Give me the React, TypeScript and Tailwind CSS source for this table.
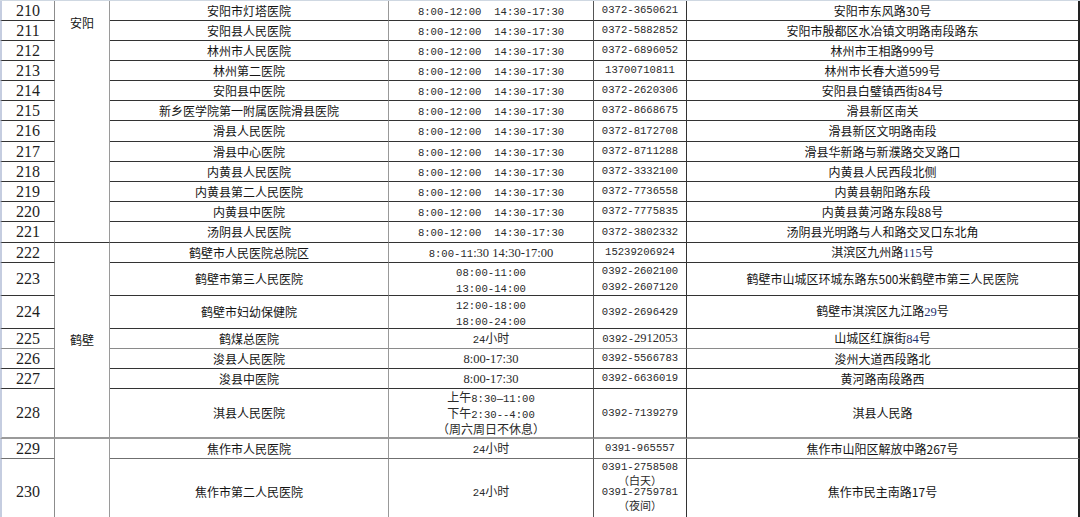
import type { ReactNode } from "react";

const cjk = "font-['Noto_Sans_CJK_SC',sans-serif] text-[12px]";
const M = ({ children }: { children: ReactNode }) => (
  <span className="font-['Liberation_Mono','Noto_Sans_CJK_SC',monospace] text-[10.6px] whitespace-pre">{children}</span>
);
const S = ({ children, blue }: { children: ReactNode; blue?: boolean }) => (
  <span className={`font-['Liberation_Serif',serif] text-[12.5px] ${blue ? "text-[#1d3170]" : ""}`}>{children}</span>
);
const C = ({ children }: { children: ReactNode }) => (
  <span className="font-['Noto_Sans_CJK_SC',sans-serif] text-[11px]">{children}</span>
);
// one line of a multi-line cell, fixed height so mixed fonts can't stretch the row
const L = ({ children, tight }: { children: ReactNode; tight?: boolean }) => (
  <div className={tight ? "h-[12.5px] leading-[12.5px] overflow-visible" : "h-[16px] leading-[16px] overflow-visible"}>{children}</div>
);

type Row = {
  n: string;
  h: string;
  hosp: ReactNode;
  hours: ReactNode;
  phone: ReactNode;
  addr: ReactNode;
  b?: string;
  phoneCls?: string;
};

const std = <M>{"8:00-12:00  14:30-17:30"}</M>;

const anyang: Row[] = [
  { n: "210", h: "h-[20px]", hosp: "安阳市灯塔医院", hours: std, phone: "0372-3650621", addr: "安阳市东风路30号" },
  { n: "211", h: "h-[20px]", hosp: "安阳县人民医院", hours: std, phone: "0372-5882852", addr: "安阳市殷都区水冶镇文明路南段路东" },
  { n: "212", h: "h-[20px]", hosp: "林州市人民医院", hours: std, phone: "0372-6896052", addr: "林州市王相路999号" },
  { n: "213", h: "h-[20px]", hosp: "林州第二医院", hours: std, phone: "13700710811", addr: "林州市长春大道599号" },
  { n: "214", h: "h-[20px]", hosp: "安阳县中医院", hours: std, phone: "0372-2620306", addr: "安阳县白璧镇西街84号" },
  { n: "215", h: "h-[20px]", hosp: "新乡医学院第一附属医院滑县医院", hours: std, phone: "0372-8668675", addr: "滑县新区南关" },
  { n: "216", h: "h-[21px]", hosp: "滑县人民医院", hours: std, phone: "0372-8172708", addr: "滑县新区文明路南段" },
  { n: "217", h: "h-[20px]", hosp: "滑县中心医院", hours: std, phone: "0372-8711288", addr: "滑县华新路与新濮路交叉路口" },
  { n: "218", h: "h-[20px]", hosp: "内黄县人民医院", hours: std, phone: "0372-3332100", addr: "内黄县人民西段北侧" },
  { n: "219", h: "h-[20px]", hosp: "内黄县第二人民医院", hours: std, phone: "0372-7736558", addr: "内黄县朝阳路东段" },
  { n: "220", h: "h-[20px]", hosp: "内黄县中医院", hours: std, phone: "0372-7775835", addr: "内黄县黄河路东段88号" },
  { n: "221", h: "h-[21px]", hosp: "汤阴县人民医院", hours: std, phone: "0372-3802332", addr: "汤阴县光明路与人和路交叉口东北角" },
];

const hebi: Row[] = [
  {
    n: "222",
    h: "h-[20px]",
    hosp: "鹤壁市人民医院总院区",
    hours: (
      <>
        <M>8:00-11</M>
        <S>:30 14:30-17:00</S>
      </>
    ),
    phone: <M>15239206924</M>,
    addr: (
      <>
        淇滨区九州路<S blue>115</S>号
      </>
    ),
  },
  {
    n: "223",
    h: "h-[32px]",
    hosp: "鹤壁市第三人民医院",
    hours: (
      <>
        <L><M>08:00-11:00</M></L>
        <L><M>13:00-14:00</M></L>
      </>
    ),
    phone: (
      <>
        <L>0392-2602100</L>
        <L>0392-2607120</L>
      </>
    ),
    addr: "鹤壁市山城区环城东路东500米鹤壁市第三人民医院",
  },
  {
    n: "224",
    h: "h-[32px]",
    hosp: "鹤壁市妇幼保健院",
    hours: (
      <>
        <L><M>12:00-18:00</M></L>
        <L><M>18:00-24:00</M></L>
      </>
    ),
    phone: "0392-2696429",
    addr: (
      <>
        鹤壁市淇滨区九江路<S blue>29</S>号
      </>
    ),
  },
  {
    n: "225",
    h: "h-[20px]",
    hosp: "鹤煤总医院",
    hours: (
      <>
        <M>24</M>小时
      </>
    ),
    phone: (
      <>
        0392-<S>2912053</S>
      </>
    ),
    addr: (
      <>
        山城区红旗街<S blue>84</S>号
      </>
    ),
    b: "border-b-[#8a8a8a]",
  },
  { n: "226", h: "h-[20px]", hosp: "浚县人民医院", hours: <S>8:00-17:30</S>, phone: "0392-5566783", addr: "浚州大道西段路北" },
  { n: "227", h: "h-[20px]", hosp: "浚县中医院", hours: <S>8:00-17:30</S>, phone: "0392-6636019", addr: "黄河路南段路西" },
  {
    n: "228",
    h: "h-[48px]",
    hosp: "淇县人民医院",
    hours: (
      <>
        <L>上午<M>8:30—11:00</M></L>
        <L>下午<M>2:30--4:00</M></L>
        <L>（周六周日不休息）</L>
      </>
    ),
    phone: "0392-7139279",
    addr: "淇县人民路",
    b: "border-b-2 border-b-[#9a9a9a]",
  },
];

const jiaozuo: Row[] = [
  {
    n: "229",
    h: "h-[20px]",
    hosp: "焦作市人民医院",
    hours: (
      <>
        <M>24</M>小时
      </>
    ),
    phone: "0391-965557",
    addr: "焦作市山阳区解放中路267号",
    b: "border-b-[#6f6f6f]",
  },
  {
    n: "230",
    h: "h-[66px]",
    hosp: "焦作市第二人民医院",
    hours: (
      <>
        <M>24</M>小时
      </>
    ),
    phone: (
      <div className="pt-[2px]">
        <L tight>0391-2758508</L>
        <L tight><C>（白天）</C></L>
        <L tight>0391-2759781</L>
        <L tight><C>（夜间）</C></L>
      </div>
    ),
    phoneCls: "align-top",
    addr: "焦作市民主南路17号",
  },
];

const groups = [
  { name: "安阳", rows: anyang, cls: "align-top pt-[13px]", b: "border-b-[#333]" },
  { name: "鹤壁", rows: hebi, cls: "align-middle", b: "border-b-2 border-b-[#9a9a9a]" },
  { name: "", rows: jiaozuo, cls: "align-middle", b: "border-b-[#333]" },
];

function TableRow({ r, region }: { r: Row; region?: ReactNode }) {
  const b = r.b ?? "border-b-[#333]";
  return (
    <tr className={r.h}>
      <td className={`border-l-2 border-l-[#c5cde0] border-r border-r-[#8c8c8c] border-b ${b} text-center align-middle font-['Liberation_Serif',serif] text-[16px] leading-none text-[#1e1e1e]`}>
        {r.n}
      </td>
      {region}
      <td className={`border-r border-r-[#999] border-b ${b} text-center align-middle whitespace-nowrap leading-none`}>{r.hosp}</td>
      <td className={`border-r border-r-[#555] border-b ${b} text-center align-middle whitespace-nowrap leading-none text-[#2a2a2a]`}>{r.hours}</td>
      <td className={`border-r border-r-[#333] border-b ${b} text-center whitespace-nowrap leading-none text-[#2a2a2a] font-['Liberation_Mono','Noto_Sans_CJK_SC',monospace] text-[10.6px] ${r.phoneCls ?? "align-middle"}`}>
        {r.phone}
      </td>
      <td className={`border-r-2 border-r-[#222] border-b ${b} text-center align-middle whitespace-nowrap leading-none`}>{r.addr}</td>
    </tr>
  );
}

export default function App() {
  return (
    <div className="w-[1080px] h-[517px] overflow-hidden bg-white">
      <div className={`border-t border-t-[#cfd8e2] text-[#141414] ${cjk}`}>
        <table className="table-fixed border-separate border-spacing-0 w-[1080px]">
          <colgroup>
            <col className="w-[55px]" />
            <col className="w-[55px]" />
            <col className="w-[279px]" />
            <col className="w-[205px]" />
            <col className="w-[93px]" />
            <col className="w-[393px]" />
          </colgroup>
          <tbody>
            {groups.map((g) =>
              g.rows.map((r, i) => (
                <TableRow
                  key={r.n}
                  r={r}
                  region={
                    i === 0 ? (
                      <td
                        rowSpan={g.rows.length}
                        className={`border-r border-r-[#9a9a9a] border-b ${g.b} text-center ${g.cls}`}
                      >
                        {g.name}
                      </td>
                    ) : undefined
                  }
                />
              ))
            )}
          </tbody>
        </table>
      </div>
    </div>
  );
}
